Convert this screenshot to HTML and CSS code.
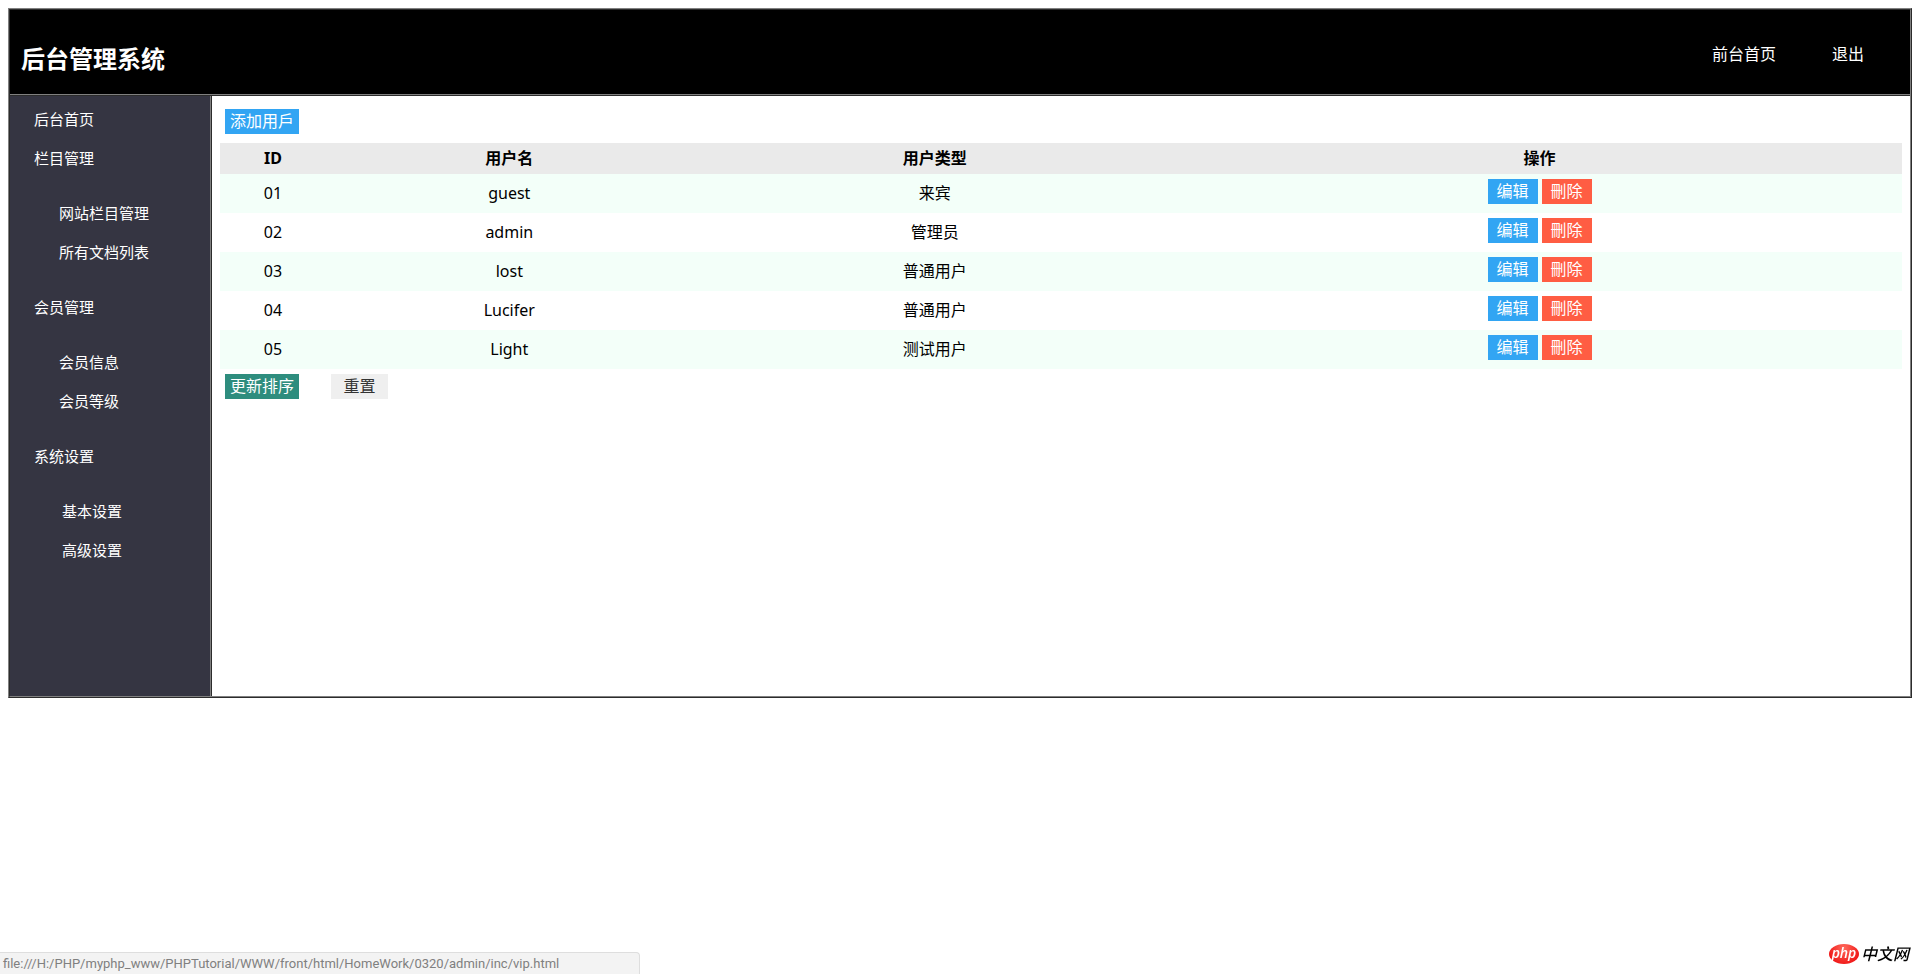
FILE: index.html
```html
<!DOCTYPE html>
<html lang="zh-CN">
<head>
<meta charset="utf-8">
<title>后台管理系统</title>
<link rel="stylesheet" href="styles.css">
</head>
<body>
<div class="admin">
  <header class="topbar">
    <h1 class="title">后台管理系统</h1>
    <nav class="top-links">
      <a href="#home">前台首页</a>
      <a href="#logout">退出</a>
    </nav>
  </header>
  <div class="body">
    <nav class="sidebar">
      <ul class="menu">
        <li><a href="#index">后台首页</a></li>
        <li><a href="#columns">栏目管理</a>
          <ul class="submenu">
            <li><a href="#site">网站栏目管理</a></li>
            <li><a href="#docs">所有文档列表</a></li>
          </ul>
        </li>
        <li><a href="#members">会员管理</a>
          <ul class="submenu">
            <li><a href="#info">会员信息</a></li>
            <li><a href="#level">会员等级</a></li>
          </ul>
        </li>
        <li><a href="#system">系统设置</a>
          <ul class="submenu submenu-deep">
            <li><a href="#basic">基本设置</a></li>
            <li><a href="#advanced">高级设置</a></li>
          </ul>
        </li>
      </ul>
    </nav>
    <main class="content">
      <div class="actions"><button class="btn blue" type="button">添加用戶</button></div>
      <table class="users">
        <colgroup><col class="c-id"><col class="c-name"><col class="c-type"><col class="c-ops"></colgroup>
        <thead>
          <tr><th>ID</th><th>用户名</th><th>用户类型</th><th>操作</th></tr>
        </thead>
        <tbody>
          <tr><td>01</td><td>guest</td><td>来宾</td><td><div class="ops"><button class="btn blue" type="button">编辑</button><button class="btn red" type="button">刪除</button></div></td></tr>
          <tr><td>02</td><td>admin</td><td>管理员</td><td><div class="ops"><button class="btn blue" type="button">编辑</button><button class="btn red" type="button">刪除</button></div></td></tr>
          <tr><td>03</td><td>lost</td><td>普通用户</td><td><div class="ops"><button class="btn blue" type="button">编辑</button><button class="btn red" type="button">刪除</button></div></td></tr>
          <tr><td>04</td><td>Lucifer</td><td>普通用户</td><td><div class="ops"><button class="btn blue" type="button">编辑</button><button class="btn red" type="button">刪除</button></div></td></tr>
          <tr><td>05</td><td>Light</td><td>测试用户</td><td><div class="ops"><button class="btn blue" type="button">编辑</button><button class="btn red" type="button">刪除</button></div></td></tr>
        </tbody>
      </table>
      <div class="actions actions-bottom">
        <button class="btn green" type="button">更新排序</button>
        <button class="btn plain" type="button">重置</button>
      </div>
    </main>
  </div>
</div>
<div class="status">file:///H:/PHP/myphp_www/PHPTutorial/WWW/front/html/HomeWork/0320/admin/inc/vip.html</div>
<div class="brand"><span class="brand-php">php</span><span class="brand-name">中文网</span></div>
</body>
</html>
```
FILE: styles.css
```css
* { box-sizing: border-box; }
body {
  margin: 8px;
  background: #fff;
  color: #000;
  font: 15px/20px "Noto Sans", "Noto Sans CJK SC", sans-serif;
}
a { color: inherit; text-decoration: none; }
.admin { border: 2px ridge gray; }
.topbar {
  display: flex;
  justify-content: space-between;
  align-items: center;
  height: 86px;
  padding: 0 46px 0 11px;
  background: #000;
  border-bottom: 2px ridge gray;
  color: #fff;
}
.title { margin: 14px 0 0; font-size: 24px; line-height: 32px; font-weight: 700; }
.top-links { display: flex; gap: 56px; font-size: 16px; line-height: 24px; padding-top: 4px; }
.body { display: flex; min-height: 600px; }
.sidebar {
  flex: 0 0 202px;
  background: #353542;
  border-right: 2px ridge gray;
  color: #fff;
  line-height: 39px;
}
.menu, .submenu { list-style: none; margin: 0; padding: 0; }
.menu { padding: 4px 0 0 24px; }
.submenu { margin: 16px 0; padding-left: 25px; }
.submenu-deep { padding-left: 28px; }
.sidebar a { display: block; }
.content { flex: 1; min-width: 0; padding: 13px 8px; }
.actions { display: flex; padding-left: 5px; margin-bottom: 9px; }
.actions-bottom { gap: 32px; margin: 5px 0 0; }
.btn {
  height: 25px;
  padding: 0 5px 2px;
  border: 0;
  color: #fff;
  font: 16px/23px "Noto Sans CJK SC", sans-serif;
}
.actions .btn { width: 74px; }
.blue { background: #32a5f3; }
.red { background: #ff5d43; }
.green { background: #2e8d7e; }
.actions .plain { width: 57px; background: #efefef; color: #333; }
.users {
  width: 100%;
  table-layout: fixed;
  border-collapse: collapse;
  text-align: center;
  font-size: 16px;
}
.c-id { width: 6.3%; }
.c-name { width: 21.8%; }
.c-type { width: 28.8%; }
.users th { height: 31px; padding: 0 0 2px; background: #eaeaea; font-weight: 700; }
.users td { height: 39px; padding: 0 0 2px; }
.users tbody tr:nth-child(odd) { background: #f3fff9; }
.ops { display: flex; justify-content: center; gap: 4px; padding-bottom: 2px; }
.ops .btn { width: 50px; }
.status {
  position: fixed;
  left: 0;
  bottom: 0;
  width: 640px;
  height: 22px;
  padding-left: 3px;
  border: 1px solid #dedede;
  border-width: 1px 1px 0 0;
  border-radius: 0 4px 0 0;
  background: #f3f3f3;
  color: #808080;
  font: 13px/21px Roboto, sans-serif;
}
.brand {
  position: fixed;
  right: 11px;
  bottom: 10px;
  display: flex;
  align-items: center;
  gap: 2px;
  font-style: italic;
}
.brand-php {
  width: 30px;
  height: 20px;
  border-radius: 50%;
  background: radial-gradient(ellipse at 50% 20%, #ff6a5c, #f01818 75%);
  color: #fff;
  font: italic 600 14px/17px "Open Sans", sans-serif;
  text-align: center;
}
.brand-name { font-size: 16px; font-weight: 500; line-height: 20px; }
```
